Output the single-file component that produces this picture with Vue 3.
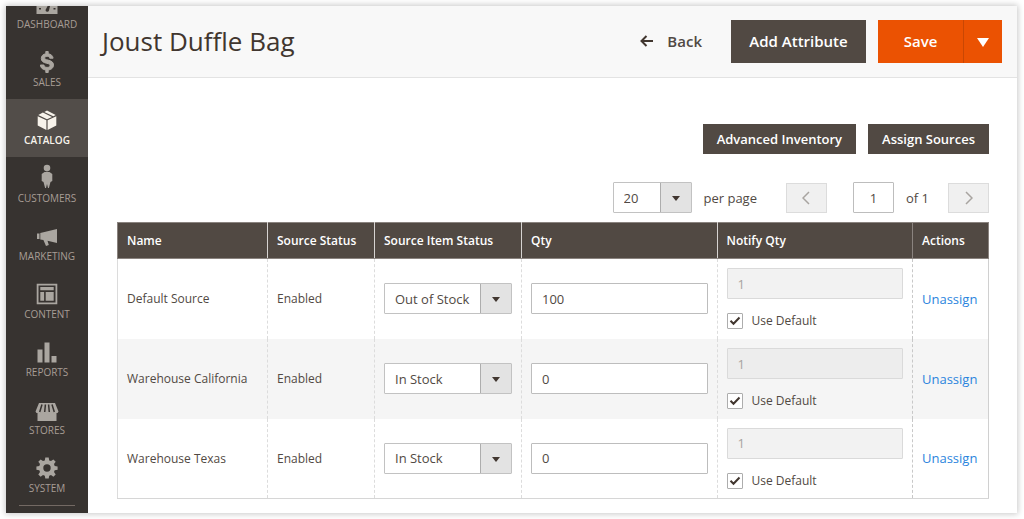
<script setup>
import { ref } from 'vue'

const menu = [
  { id: 'dashboard', label: 'Dashboard' },
  { id: 'sales', label: 'Sales' },
  { id: 'catalog', label: 'Catalog', active: true },
  { id: 'customers', label: 'Customers' },
  { id: 'marketing', label: 'Marketing' },
  { id: 'content', label: 'Content' },
  { id: 'reports', label: 'Reports' },
  { id: 'stores', label: 'Stores' },
  { id: 'system', label: 'System' }
]

const pageSize = ref('20')
const page = ref('1')
const sources = ref([
  { id: 1, name: 'Default Source', status: 'Enabled', stock: 'Out of Stock', qty: '100', notify: '1', useDefault: true },
  { id: 2, name: 'Warehouse California', status: 'Enabled', stock: 'In Stock', qty: '0', notify: '1', useDefault: true },
  { id: 3, name: 'Warehouse Texas', status: 'Enabled', stock: 'In Stock', qty: '0', notify: '1', useDefault: true }
])
</script>

<template>
  <div class="frame">
    <nav class="sidebar" aria-label="Main menu">
      <ul class="menu">
        <li v-for="item in menu" :key="item.id">
          <a href="#" class="menu-item" :class="{ active: item.active }">
            <svg class="menu-icon" viewBox="0 0 24 24" aria-hidden="true">
              <g v-if="item.id === 'dashboard'">
                <path d="M1.500 6h21v16h-21z" />
                <path class="cut" d="M10.500 18l4-7.500 1.200.5-1.700 7.500a1.800 1.800 0 0 1-3.500-.5zM4 16h2v1.500H4zM18.500 16h2v1.500h-2zM6 12l1-1 1 1-1 1z" />
              </g>
              <path v-else-if="item.id === 'sales'" class="bold" d="M10.800 1.500h2.400v2.300c2.800.3 4.600 1.900 4.900 4.400h-3.400c-.2-1.200-1-1.900-2.500-1.900-1.600 0-2.500.7-2.500 1.700 0 1.200 1 1.600 3.300 2.100 3.500.8 5.500 2 5.500 5 0 2.700-2 4.600-5.300 4.900v2.500h-2.400V20c-3.200-.4-5.200-2.100-5.400-5h3.500c.2 1.600 1.300 2.400 3.200 2.400s2.900-.7 2.900-1.900-.9-1.700-3.300-2.200c-3.400-.8-5.400-2-5.400-4.900 0-2.500 1.800-4.300 4.500-4.600z" />
              <path v-else-if="item.id === 'catalog'" d="M2.700 8.300l8.700 4v9.700l-8.700-4.400zM21.300 8.300v9.300L12.600 22v-9.700zM7.900 4.600L17 8.900 12 11.200 3.300 7zM9.300 3.900L12 2.600 20.700 7l-2.400 1.200z" />
              <path v-else-if="item.id === 'customers'" d="M12 -1.200a3.300 3.300 0 1 1 0 6.600 3.300 3.300 0 0 1 0-6.600zM9.500 6h5l2.800 2v7l-1.800.9-1.600 6H13L12 18l-1 3.900H10.100l-1.600-6-1.800-.9V8z" />
              <path v-else-if="item.id === 'marketing'" d="M2 9.500h2.500v5.500H2zM5.300 9L22 5v14l-9.500-2.200 1.300 4.200-2.800 1-2.600-6-3.100-.6z" />
              <path v-else-if="item.id === 'content'" fill-rule="evenodd" d="M1.700 1.700h20.600v20.600H1.700zM3.500 3.500v17h17v-17zM5.300 5h13.400v3.300H5.300zM5.300 10h3.800v8.700H5.300zM10.700 10h8v8.700h-8z" />
              <path v-else-if="item.id === 'reports'" d="M2.500 9.500h5V22.500h-5zM9.500 2.500h5v20h-5zM16.500 16h5v6.500h-5z" />
              <g v-else-if="item.id === 'stores'">
                <path d="M4 5h16l3.500 8.500-1 1.500H21.500v8H2.500v-8H1.500l-1-1.500z" />
                <path class="gap" d="M7 6.500l-2.300 7.500M10.400 6.500l-.7 7.500M13.600 6.500l.7 7.500M17 6.500l2.300 7.500" />
              </g>
              <path v-else fill-rule="evenodd" d="M10.300 1.500h3.400l.5 2.900 1.800.7 2.400-1.700 2.300 2.300L19 8.100l.7 1.800 2.900.5v3.300l-2.900.5-.7 1.800 1.700 2.400-2.300 2.300-2.400-1.700-1.800.7-.5 2.900h-3.400l-.5-2.900L8 19l-2.400 1.700-2.300-2.300L5 16l-.7-1.800-2.900-.5v-3.300l2.900-.5.700-1.800-1.700-2.400 2.300-2.300L8 5.100l1.800-.7zM12 8.300a3.700 3.700 0 1 0 0 7.400 3.700 3.700 0 0 0 0-7.400z" />
            </svg>
            <span>{{ item.label }}</span>
          </a>
        </li>
      </ul>
      <hr class="menu-rule" />
    </nav>

    <main class="page">
      <header class="page-header">
        <h1>Joust Duffle Bag</h1>
        <div class="page-actions">
          <button type="button" class="back">
            <svg viewBox="0 0 14 12" aria-hidden="true"><path d="M6.500 1L1.500 6l5 5M1.500 6H13" /></svg>
            Back
          </button>
          <button type="button" class="primary dark">Add Attribute</button>
          <div class="split">
            <button type="button" class="primary save">Save</button>
            <button type="button" class="primary toggle" aria-label="More save options">
              <svg viewBox="0 0 12 10" aria-hidden="true"><path d="M0 1h12L6 10z" /></svg>
            </button>
          </div>
        </div>
      </header>

      <section class="content">
        <div class="source-actions">
          <button type="button" class="secondary">Advanced Inventory</button>
          <button type="button" class="secondary">Assign Sources</button>
        </div>

        <div class="pager">
          <div class="select size">
            <select id="page-size" v-model="pageSize">
              <option>20</option>
              <option>50</option>
              <option>100</option>
            </select>
          </div>
          <label for="page-size" class="per-page">per page</label>
          <button type="button" class="step" aria-label="Previous page" disabled>
            <svg viewBox="0 0 8 14" aria-hidden="true"><path d="M7 1L1 7l6 6" /></svg>
          </button>
          <input id="page-number" v-model="page" class="field page-number" type="text" />
          <label for="page-number" class="of">of 1</label>
          <button type="button" class="step" aria-label="Next page" disabled>
            <svg viewBox="0 0 8 14" aria-hidden="true"><path d="M1 1l6 6-6 6" /></svg>
          </button>
        </div>

        <table class="grid">
          <colgroup>
            <col class="col-name" />
            <col class="col-status" />
            <col class="col-stock" />
            <col />
            <col />
            <col class="col-actions" />
          </colgroup>
          <thead>
            <tr>
              <th scope="col">Name</th>
              <th scope="col">Source Status</th>
              <th scope="col">Source Item Status</th>
              <th scope="col">Qty</th>
              <th scope="col">Notify Qty</th>
              <th scope="col">Actions</th>
            </tr>
          </thead>
          <tbody>
            <tr v-for="row in sources" :key="row.id">
              <td>{{ row.name }}</td>
              <td>{{ row.status }}</td>
              <td>
                <div class="select">
                  <select v-model="row.stock" :aria-label="'Source item status, ' + row.name">
                    <option>Out of Stock</option>
                    <option>In Stock</option>
                  </select>
                </div>
              </td>
              <td><input v-model="row.qty" class="field" type="text" :aria-label="'Qty, ' + row.name" /></td>
              <td>
                <input v-model="row.notify" class="field" type="text" :disabled="row.useDefault" :aria-label="'Notify qty, ' + row.name" />
                <label class="check">
                  <span class="box">
                    <input v-model="row.useDefault" type="checkbox" />
                    <svg viewBox="0 0 12 10" aria-hidden="true"><path d="M1.500 4.800l3 3L10.500 1.500" /></svg>
                  </span>
                  Use Default
                </label>
              </td>
              <td><a href="#" class="unassign">Unassign</a></td>
            </tr>
          </tbody>
        </table>
      </section>
    </main>
  </div>
</template>

<style>
body {
  background: #fff;
}
</style>

<style scoped>
* {
  box-sizing: border-box;
}

.frame,
button,
input,
select {
  font-family: "Open Sans", "Noto Sans", sans-serif;
}

.frame {
  display: flex;
  margin: 6px 7px 6px 6px;
  height: calc(100vh - 12px);
  background: #fff;
  color: #514943;
  font-size: 12px;
  box-shadow: 0 0 6px 1px rgba(0, 0, 0, 0.22);
}

.sidebar {
  flex: none;
  width: 82px;
  overflow: hidden;
  background: #373330;
}

.menu {
  list-style: none;
  margin: -23px 0 0;
  padding: 0;
}

.menu-item {
  display: flex;
  flex-direction: column;
  align-items: center;
  gap: 1px;
  height: 58px;
  padding-top: 9px;
  color: #a79d95;
  font-size: 10px;
  line-height: 14px;
  text-transform: uppercase;
  text-decoration: none;
}

.menu-item.active {
  background: #524d49;
  color: #f7f3eb;
  font-weight: 600;
}

.menu-icon {
  width: 24px;
  height: 24px;
  overflow: visible;
  fill: #aaa6a0;
}

.active .menu-icon {
  fill: #f7f3eb;
}

.bold {
  stroke: #aaa6a0;
  stroke-width: 1;
}

.cut {
  fill: #373330;
}

.gap {
  fill: none;
  stroke: #373330;
  stroke-width: 1.500;
}

.menu-rule {
  margin: 0 13px;
  border: 0;
  border-top: 1px solid #736963;
}

.page {
  flex: 1;
  min-width: 0;
}

.page-header {
  display: flex;
  align-items: center;
  justify-content: space-between;
  height: 72px;
  padding: 0 15px 0 14px;
  background: #f8f8f8;
  border-bottom: 1px solid #e3e3e3;
}

h1 {
  margin: 0;
  padding-bottom: 2px;
  color: #41362f;
  font-size: 26px;
  font-weight: 400;
  line-height: 36px;
}

button {
  padding: 0;
  border: 0;
  cursor: pointer;
}

.page-actions {
  display: flex;
  align-items: center;
  gap: 12px;
}

.back {
  display: flex;
  align-items: center;
  gap: 13px;
  margin-right: 17px;
  padding-bottom: 1px;
  background: none;
  color: #514943;
  font-size: 15px;
  font-weight: 600;
}

.back svg {
  width: 14px;
  height: 12px;
  fill: none;
  stroke: #41362f;
  stroke-width: 2;
}

.primary {
  height: 43px;
  padding-bottom: 2px;
  color: #fff;
  font-size: 15px;
  font-weight: 600;
}

.dark {
  width: 135px;
  background: #514943;
}

.split {
  display: flex;
}

.save {
  width: 86px;
  background: #eb5202;
  border-right: 1px solid #c94703;
}

.toggle {
  display: flex;
  align-items: center;
  justify-content: center;
  width: 38px;
  padding: 0;
  background: #eb5202;
}

.toggle svg {
  width: 12px;
  height: 10px;
  fill: #fff;
}

.content {
  padding: 46px 28px 0 29px;
}

.source-actions {
  display: flex;
  justify-content: flex-end;
  gap: 12px;
}

.secondary {
  height: 30px;
  padding: 0 14px;
  background: #514943;
  color: #fff;
  font-size: 13px;
  font-weight: 600;
}

.pager {
  display: flex;
  align-items: center;
  justify-content: flex-end;
  margin: 28px 0 9px;
  font-size: 13px;
}

.select {
  position: relative;
}

.select select {
  display: block;
  width: 100%;
  height: 31px;
  padding: 0 32px 0 10px;
  appearance: none;
  border: 1px solid #c2c2c2;
  border-radius: 1px;
  background: linear-gradient(#adadad, #adadad) right 30px top / 1px 100% no-repeat,
    linear-gradient(#e3e3e3, #e3e3e3) right top / 30px 100% no-repeat, #fff;
  color: #514943;
  font-size: 13px;
}

.select::after {
  content: "";
  position: absolute;
  top: 14px;
  right: 12px;
  border: 4px solid transparent;
  border-top: 5px solid #41362f;
  border-bottom: 0;
  pointer-events: none;
}

.size {
  width: 79px;
}

.per-page {
  margin: 0 29px 0 12px;
}

.step {
  display: flex;
  align-items: center;
  justify-content: center;
  width: 41px;
  height: 30px;
  background: #f0f0f0;
  border: 1px solid #dcdcdc;
}

.step svg {
  width: 8px;
  height: 14px;
  fill: none;
  stroke: #a8a4a0;
  stroke-width: 1.500;
}

.field {
  display: block;
  width: 100%;
  height: 31px;
  padding: 0 10px;
  border: 1px solid #bdbdbd;
  border-radius: 1px;
  background: #fff;
  color: #514943;
  font-size: 13px;
}

.field:disabled {
  background: rgba(230, 230, 230, 0.5);
  border-color: #dadada;
  color: #a8a4a0;
}

.page-number {
  width: 41px;
  margin-left: 26px;
  text-align: center;
}

.of {
  margin: 0 19px 0 12px;
}

.grid {
  width: 100%;
  table-layout: fixed;
  border-collapse: collapse;
}

.col-name {
  width: 150px;
}

.col-status {
  width: 107px;
}

.col-stock {
  width: 147px;
}

.col-actions {
  width: 76px;
}

th {
  height: 36px;
  padding: 0 9px;
  background: #514943;
  border: 1px solid #8a837f;
  border-right-color: #d6d3d1;
  color: #fff;
  font-size: 12px;
  font-weight: 600;
  text-align: left;
  white-space: nowrap;
}

th:nth-last-child(-n + 2) {
  border-right-color: #8a837f;
}

td {
  height: 80px;
  padding: 0 9px;
  border-left: 1px dashed #dcdcdc;
}

td:first-child {
  border-left: 1px solid #dcdcdc;
}

td:last-child {
  border-left-color: #c8c8c8;
  border-right: 1px solid #d0d0d0;
}

tbody tr:last-child td {
  border-bottom: 1px solid #d6d6d6;
}

tbody tr:nth-child(even) {
  background: #f5f5f5;
}

.check {
  display: flex;
  align-items: center;
  gap: 9px;
  margin-top: 14px;
  line-height: 16px;
}

.box {
  display: grid;
  place-items: center;
}

.box input,
.box svg {
  grid-area: 1 / 1;
}

.box input {
  width: 16px;
  height: 16px;
  margin: 0;
  appearance: none;
  border: 1px solid #adadad;
  border-radius: 1px;
  background: #fff;
}

.box svg {
  width: 12px;
  height: 10px;
  fill: none;
  stroke: #41362f;
  stroke-width: 2;
  pointer-events: none;
  visibility: hidden;
}

.box input:checked + svg {
  visibility: visible;
}

.unassign {
  color: #2b84dd;
  font-size: 13px;
  text-decoration: none;
}
</style>
